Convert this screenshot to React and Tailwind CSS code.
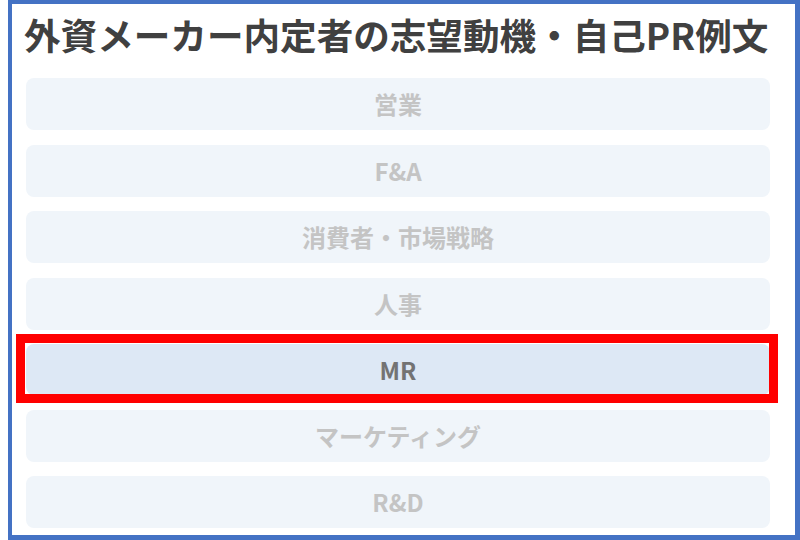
import React from "react";

const items = ["営業", "F&A", "消費者・市場戦略", "人事", "MR", "マーケティング", "R&D"];

export default function App() {
  return (
    <div className="w-[800px] h-[540px] bg-white overflow-hidden" style={{ fontFamily: '"Noto Sans CJK JP", "Noto Sans", sans-serif' }}>
      <div className="ml-[8px] w-[792px] h-[540px] border-4 border-b-[5px] border-r-[5px] border-[#4472c4] bg-white">
        <h1 className="pl-[12px] pt-[2px] text-[36.6px] leading-[58px] font-bold text-[#404040] whitespace-nowrap">
          外資メーカー内定者の志望動機・自己PR例文
        </h1>
        <div className="ml-[14px] mt-[14px] w-[744px] flex flex-col gap-[14.5px]">
          {items.map((t) =>
            t === "MR" ? (
              <div key={t} className="relative">
                <div className="h-[51px] rounded-[8px] bg-[#dde8f5] flex items-center justify-center text-[24px] font-bold text-[#737373]">
                  {t}
                </div>
                <div className="absolute top-[-10px] left-[-10px] right-[-8px] bottom-[-8px] border-[9px] border-[#ff0000]"></div>
              </div>
            ) : (
              <div key={t} className="h-[52px] rounded-[8px] bg-[#f0f5fa] flex items-center justify-center text-[24px] font-bold text-[#c4c4c4]">
                {t}
              </div>
            )
          )}
        </div>
      </div>
    </div>
  );
}
